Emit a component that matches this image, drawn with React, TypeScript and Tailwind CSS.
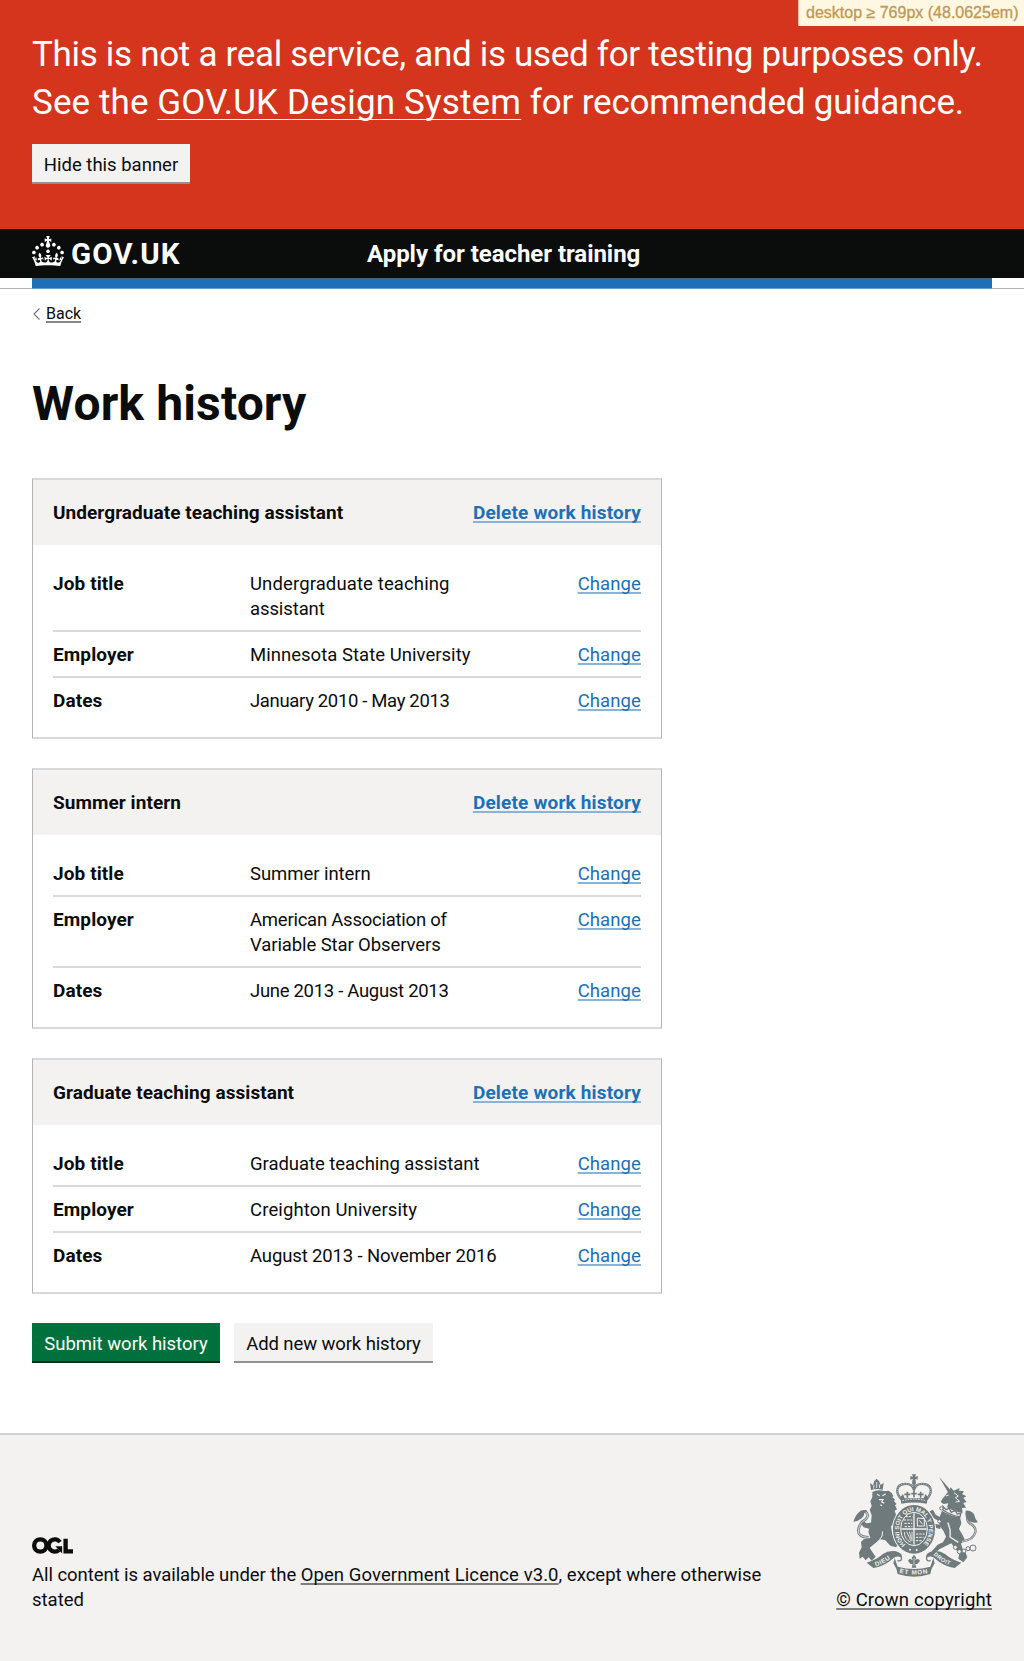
import type { ReactNode } from 'react';

type Row = { label: string; lines: { text: string; tracking: string }[] };
type Job = { title: string; rows: Row[] };

const jobs: Job[] = [
  {
    title: 'Undergraduate teaching assistant',
    rows: [
      {
        label: 'Job title',
        lines: [
          { text: 'Undergraduate teaching', tracking: 'tracking-[0.12px]' },
          { text: 'assistant', tracking: 'tracking-[-0.1px]' },
        ],
      },
      { label: 'Employer', lines: [{ text: 'Minnesota State University', tracking: 'tracking-[0.03px]' }] },
      { label: 'Dates', lines: [{ text: 'January 2010 - May 2013', tracking: 'tracking-[-0.34px]' }] },
    ],
  },
  {
    title: 'Summer intern',
    rows: [
      { label: 'Job title', lines: [{ text: 'Summer intern', tracking: 'tracking-[-0.05px]' }] },
      {
        label: 'Employer',
        lines: [
          { text: 'American Association of', tracking: 'tracking-[-0.24px]' },
          { text: 'Variable Star Observers', tracking: 'tracking-[-0.1px]' },
        ],
      },
      { label: 'Dates', lines: [{ text: 'June 2013 - August 2013', tracking: 'tracking-[-0.3px]' }] },
    ],
  },
  {
    title: 'Graduate teaching assistant',
    rows: [
      { label: 'Job title', lines: [{ text: 'Graduate teaching assistant', tracking: 'tracking-[-0.05px]' }] },
      { label: 'Employer', lines: [{ text: 'Creighton University', tracking: 'tracking-[0.12px]' }] },
      { label: 'Dates', lines: [{ text: 'August 2013 - November 2016', tracking: 'tracking-[-0.13px]' }] },
    ],
  },
];

function Link({ children, className = '' }: { children: ReactNode; className?: string }) {
  return (
    <a
      href="#"
      className={`underline decoration-2 underline-offset-2 [text-decoration-skip-ink:none] ${className}`}
    >
      {children}
    </a>
  );
}

function Crown() {
  return (
    <svg width="32" height="30" viewBox="0 0 32 30" fill="currentColor" aria-hidden="true">
      <path d="M22.6 10.4c-1 .4-2-.1-2.4-1-.4-.9.1-2 1-2.4.9-.4 2 .1 2.4 1s-.1 2-1 2.4m-5.9 6.7c-.9.4-2-.1-2.4-1-.4-.9.1-2 1-2.4.9-.4 2 .1 2.4 1s-.1 2-1 2.4m10.8-3.7c-1 .4-2-.1-2.4-1-.4-.9.1-2 1-2.4.9-.4 2 .1 2.4 1s0 2-1 2.4m3.3 4.8c-1 .4-2-.1-2.4-1-.4-.9.1-2 1-2.4.9-.4 2 .1 2.4 1s-.1 2-1 2.4M17 4.7l2.3 1.2V2.5l-2.3.7-.2-.2.9-3h-3.4l.9 3-.2.2c-.1.1-2.3-.7-2.3-.7v3.4L15 4.7c.1.1.1.2.2.2l-1.3 4c-.1.2-.1.4-.1.6 0 1.1.8 2 1.9 2.2h.7c1-.2 1.9-1.1 1.9-2.1 0-.2 0-.4-.1-.6l-1.3-4c-.1-.2 0-.2.1-.3m-7.6 5.7c.9.4 2-.1 2.4-1 .4-.9-.1-2-1-2.4-.9-.4-2 .1-2.4 1s0 2 1 2.4m-5 3c.9.4 2-.1 2.4-1 .4-.9-.1-2-1-2.4-.9-.4-2 .1-2.4 1s.1 2 1 2.4m-3.2 4.8c.9.4 2-.1 2.4-1 .4-.9-.1-2-1-2.4-.9-.4-2 .1-2.4 1s0 2 1 2.4m14.8 11c4.4 0 8.6.3 12.3.8 1.1-4.5 2.4-7 3.7-8.8l-2.5-.9c.2 1.3.3 1.9 0 2.7-.4-.4-.8-1.1-1.1-2.3l-1.2 4c.7-.5 1.3-.8 2-.9-1.1 2.5-2.6 3.1-3.5 3-1.1-.2-1.7-1.2-1.5-2.1.3-1.2 1.5-1.5 2.1-.1 1.1-2.3-.8-3-2-2.3 1.9-1.9 2.1-3.5.6-5.6-2.1 1.6-2.1 3.2-1.2 5.5-1.2-1.4-3.2-.6-2.5 1.6.9-1.4 2.1-.5 1.9.8-.2 1.1-1.7 2.1-3.5 1.9-2.7-.2-2.9-2.1-2.9-3.6.7-.1 1.9.5 2.9 1.9l.4-4.3c-1.1 1.1-2.1 1.4-3.2 1.4.4-1.2 2.1-3 2.1-3h-5.4s1.7 1.9 2.1 3c-1.1 0-2.1-.2-3.2-1.4l.4 4.3c1-1.4 2.2-2 2.9-1.9-.1 1.5-.2 3.4-2.9 3.6-1.9.2-3.4-.8-3.5-1.9-.2-1.3 1-2.2 1.9-.8.7-2.3-1.2-3-2.5-1.6.9-2.2.9-3.9-1.2-5.5-1.5 2-1.3 3.7.6 5.6-1.2-.7-3.1 0-2 2.3.6-1.4 1.8-1.1 2.1.1.2.9-.3 1.9-1.5 2.1-.9.2-2.4-.5-3.5-3 .6 0 1.2.3 2 .9l-1.2-4c-.3 1.1-.7 1.9-1.1 2.3-.3-.8-.2-1.4 0-2.7l-2.9.9C1.3 23 2.6 25.5 3.7 30c3.7-.5 7.9-.8 12.3-.8" />
    </svg>
  );
}

function LicenceLogo() {
  return (
    <svg width="41" height="17" viewBox="0 0 483 196" fill="none" stroke="currentColor" strokeWidth="51" aria-hidden="true">
      <circle cx="98" cy="98" r="72.5" />
      <path d="M329 58A72.5 72.5 0 1 0 318 151" />
      <path d="M275 106H355V193L322 158Z" fill="currentColor" stroke="none" />
      <path d="M396 18V168H483" />
    </svg>
  );
}

function RoyalArms() {
  const grey = '#6f7a7c';
  const paper = '#f3f2f1';
  return (
    <svg width="125" height="102" viewBox="36 42 375 306" fill={grey} className="ml-0.5 overflow-visible" aria-hidden="true">
      {/* lion */}
      <path d="M90 90L87 69L96 76L100 63L107 56L114 63L119 75L128 68L125 89Q107 84 90 90Z" />
      <path d="M98 86L99 74M107 84V66M116 84L115 73" stroke={paper} strokeWidth="2.5" />
      <path d="M94 96Q110 86 132 94L143 92L152 99L157 108L154 112L162 118L159 123L167 132L162 136L168 148L161 152L166 168L160 185L150 200L154 222L160 240L172 253L165 262L148 257L132 240L116 238L101 251L86 263L94 276L104 290L92 302L83 292L74 301L65 290L56 296L54 278L62 262L60 246L68 238L88 234L82 215L90 190L92 165L86 150L92 138L88 124L94 112Z" />
      <path d="M98 187L76 190L64 180L57 187L68 202L84 206L96 202Z" />
      <path d="M150 183L165 178L174 190L170 203L158 200Z" />
      <path d="M108 103L116 107M124 107L134 102M114 119H126L122 126L130 130M118 134L123 137" stroke={paper} strokeWidth="3.5" fill="none" />
      <path d="M125 214Q126 230 116 238" stroke={paper} strokeWidth="3" fill="none" />
      <path d="M83 232Q50 232 52 209Q56 188 74 178Q88 163 72 154" stroke={grey} strokeWidth="8" fill="none" />
      <path d="M83 232Q50 232 52 209Q56 188 74 178Q88 163 72 154" stroke={paper} strokeWidth="2.5" fill="none" />
      <path d="M78 150Q58 148 54 157Q44 165 37 185Q52 184 62 175Q70 168 70 160Z" />
      {/* unicorn */}
      <path d="M294 50L323 84L328 94L321 97Z" />
      <path d="M321 95L329 82L338 92L356 84L354 92L369 94L363 102L376 109L367 114L377 126L367 129L375 143L363 144L365 158Q345 158 318 142L322 130L308 132L299 126L304 117L312 107Z" />
      <path d="M315 108L323 105M339 98L352 108L343 113L356 124L344 126" stroke={paper} strokeWidth="3" fill="none" />
      <path d="M306 139L315 149L324 145L331 157L342 151L349 162L360 159L357 170Q332 168 306 150Z" stroke={grey} strokeWidth="4" fill={paper} />
      <path d="M303 152Q330 170 357 171L361 190L354 207L363 222L371 238L360 251L365 266L374 278L379 292L367 307L352 296L355 280L340 263L331 250L314 258L296 267L276 284L273 273L290 254L306 247L315 230L308 214L297 199L292 181Z" />
      <path d="M298 172L284 164L276 149L266 154L271 168L283 178L297 183ZM299 195L281 191L273 178L265 186L276 202L298 207Z" />
      <path d="M320 188Q330 207 327 231L352 247" stroke={paper} strokeWidth="4" fill="none" />
      <circle cx="295" cy="184" r="5" fill={paper} stroke={grey} strokeWidth="3" />
      <circle cx="301" cy="145" r="5" fill={paper} stroke={grey} strokeWidth="3" />
      <path d="M363 244Q397 241 403 217Q406 200 387 191Q374 180 381 158" stroke={grey} strokeWidth="7" fill="none" />
      <path d="M363 244Q397 241 403 217Q406 200 387 191Q374 180 381 158" stroke={paper} strokeWidth="2" fill="none" />
      <path d="M374 152Q389 150 399 163Q402 177 411 187Q396 190 384 183Q370 173 374 152Z" />
      <g fill={paper} stroke={grey} strokeWidth="3">
        <circle cx="343" cy="262" r="6" />
        <circle cx="355" cy="275" r="6" />
        <circle cx="369" cy="273" r="6" />
        <circle cx="381" cy="266" r="6" />
        <circle cx="396" cy="264" r="9" />
      </g>
      {/* crown */}
      <path d="M213 43H225L222 51L230 48V59L222 56L225 65H213L216 56L208 59V48L216 51Z" />
      <circle cx="219" cy="69" r="6" />
      <path d="M184 120C160 99 166 74 189 72C207 70 216 76 219 90C222 76 231 70 249 72C272 74 278 99 254 120" fill="none" stroke={grey} strokeWidth="7" />
      <path d="M184 120C160 99 166 74 189 72C207 70 216 76 219 90C222 76 231 70 249 72C272 74 278 99 254 120" fill="none" stroke={paper} strokeWidth="2" strokeDasharray="3 4" />
      <path d="M219 74V112M199 95V113M239 95V113M190 103H208M230 103H248M211 101H227" stroke={grey} strokeWidth="5" />
      <path d="M178 112L186 102L191 115H248L253 102L261 112L257 131Q219 124 181 131Z" />
      <path d="M184 122Q219 113 254 122" stroke={paper} strokeWidth="2.5" strokeDasharray="5 3" fill="none" />
      {/* garter and shield */}
      <ellipse cx="219" cy="208" rx="66" ry="76" fill={paper} />
      <ellipse cx="219" cy="208" rx="63" ry="73" />
      <ellipse cx="219" cy="207" rx="40" ry="50" fill="none" stroke={paper} strokeWidth="3" />
      <path d="M219 160V254M181 207H257" stroke={paper} strokeWidth="4" />
      <path d="M188 180H214M190 190H214M191 200H214M193 170H214" stroke={paper} strokeWidth="3" strokeDasharray="7 3" />
      <path d="M225 222H251M225 232H248M225 242H242" stroke={paper} strokeWidth="3" strokeDasharray="7 3" />
      <path d="M229 174V198H250V176ZM235 181L244 192" stroke={paper} strokeWidth="3" fill="none" />
      <path d="M190 216Q190 238 209 247M197 215L210 243M205 215L211 236M213 215V244" stroke={paper} strokeWidth="2.5" fill="none" />
      <path id="garter" d="M194 254A45 55 0 1 1 244 254" fill="none" />
      <text fill={paper} fontFamily="Liberation Sans" fontSize="18" fontWeight="700">
        <textPath href="#garter" textLength="256" lengthAdjust="spacing">HONI SOIT QUI MAL Y PENSE</textPath>
      </text>
      <circle cx="207" cy="269" r="3" fill={paper} />
      <circle cx="227" cy="270" r="3" fill={paper} />
      {/* motto ribbon */}
      <path d="M219 284L226 293L223 300L232 296L237 303L229 312L223 312L226 323H212L215 312L209 312L201 303L206 296L215 300L212 293Z" />
      <path d="M219 292V317" stroke={paper} strokeWidth="2" />
      <path d="M77 308Q105 300 126 282Q143 270 165 274Q186 280 181 292Q165 286 158 294Q131 319 97 324Z" />
      <path d="M361 308Q333 300 312 282Q295 270 273 274Q252 280 257 292Q273 286 280 294Q307 319 341 324Z" />
      <path d="M179 285Q187 306 169 302M259 285Q251 306 269 302" fill="none" stroke={grey} strokeWidth="4" />
      <path d="M161 294Q165 306 170 320Q219 334 268 320Q273 306 277 294L281 310Q270 326 268 342Q219 358 170 342Q168 326 157 310Z" />
      <path id="motto-left" d="M104 319Q132 311 155 290" fill="none" />
      <path id="motto-right" d="M277 284Q302 309 336 319" fill="none" />
      <path id="motto-centre" d="M175 338Q219 349 266 338" fill="none" />
      <g fill={paper} fontFamily="Liberation Sans" fontWeight="700" fontSize="19">
        <text><textPath href="#motto-left" textLength="50">DIEU</textPath></text>
        <text fontSize="17"><textPath href="#motto-right" textLength="58">DROIT</textPath></text>
        <text><textPath href="#motto-centre" textLength="86">ET MON</textPath></text>
      </g>
    </svg>
  );
}

function Card({ job }: { job: Job }) {
  return (
    <section className="border-x border-y-2 border-x-[#b1b4b6] border-y-[#d8d9da]">
      <div className="flex h-[65px] items-center justify-between bg-[#f3f2f1] px-5 pb-px text-[19px] font-bold">
        <h2 className="tracking-[0.06px]">{job.title}</h2>
        <Link className="text-[#1d70b8] decoration-[#88b4da] tracking-[0.17px]">Delete work history</Link>
      </div>
      <dl className="px-5 pt-4 pb-[15px]">
        {job.rows.map((row) => (
          <div
            key={row.label}
            className="flex border-b-2 border-[#d8d9da] pt-[11px] pb-2 last:border-b-0"
          >
            <dt className="-mt-px w-[197px] text-[19px] font-bold tracking-[0.1px]">{row.label}</dt>
            <dd className="grow">
              {row.lines.map((line) => (
                <div key={line.text} className={line.tracking}>{line.text}</div>
              ))}
            </dd>
            <dd>
              <Link className="text-[#1d70b8] decoration-[#88b4da] tracking-[0.1px]">Change</Link>
            </dd>
          </div>
        ))}
      </dl>
    </section>
  );
}

export default function App() {
  return (
    <div className="relative h-[1661px] overflow-hidden bg-white font-['Roboto',sans-serif] text-[18.5px] leading-[25px] text-[#0b0c0c]">
      <div className="absolute top-0 right-0 h-[26px] w-[226px] border-l border-[#f3b9a0] bg-[#fef7e2] pl-[7px] font-['Liberation_Sans',sans-serif] text-base leading-[25px] whitespace-nowrap text-[#c09853] [-webkit-text-stroke:0.3px_#c09853]">
        desktop ≥ 769px (48.0625em)
      </div>

      <div className="h-[229px] bg-[#d4351c] px-8 pt-[31px] text-[35px] leading-[48px] whitespace-nowrap text-white">
        <p>
          <span className="tracking-[-0.31px]">This is not a real service, and is used for testing purposes only.</span>
          <br />
          <span className="tracking-[0.1px]">See the </span>
          <a href="#" className="tracking-[0.17px] underline decoration-1 underline-offset-[5px] [text-decoration-skip-ink:none]">
            GOV.UK Design System
          </a>
          <span className="tracking-[-0.18px]"> for recommended guidance.</span>
        </p>
        <button className="mt-[17px] block h-[40px] w-[158px] border-b-2 border-[#929191] bg-[#f3f2f1] pt-[3px] text-[18.5px] leading-[37px] text-[#0b0c0c]">
          Hide this banner
        </button>
      </div>

      <header>
        <div className="h-[49px] bg-[#0b0c0c] px-8 text-white">
          <div className="flex pt-[7px]">
            <Crown />
            <div className="w-[303px] pt-px pl-[7px] text-[29.5px] leading-[34px] font-bold tracking-[1.1px]">GOV.UK</div>
            <div className="pt-px text-2xl leading-[34px] font-bold tracking-[-0.04px]">Apply for teacher training</div>
          </div>
        </div>
        <div className="border-b border-[#b1b4b6] px-8">
          <div className="-mb-px h-[11px] border-t border-b border-t-[#4b6579] border-b-[#679ac4] bg-[#1d70b8]" />
        </div>
      </header>

      <main className="px-8">
        <div className="flex items-start pt-[15px] text-base leading-5">
          <svg width="14" height="12" viewBox="0 0 14 12" fill="none" stroke="#6f7475" strokeWidth="1.1" className="mt-1" aria-hidden="true">
            <path d="M7.5 .5L2 6L7.5 11.5" />
          </svg>
          <Link className="decoration-[#858686]">Back</Link>
        </div>
        <h1 className="mt-[55px] text-5xl leading-[50px] font-bold tracking-[0.14px]">Work history</h1>

        <div className="mt-[49px] flex w-[630px] flex-col gap-[29px]">
          {jobs.map((job) => (
            <Card key={job.title} job={job} />
          ))}
        </div>

        <div className="mt-[29px] flex gap-3.5">
          <button className="h-[40px] w-[188px] border-b-2 border-[#00301a] bg-[#00703c] pt-[3px] leading-[37px] text-white">
            Submit work history
          </button>
          <button className="h-[40px] w-[199px] border-b-2 border-[#929191] bg-[#f3f2f1] pt-[3px] leading-[37px] tracking-[-0.1px]">
            Add new work history
          </button>
        </div>
      </main>

      <footer className="mt-[70px] flex h-[228px] items-start justify-between border-t-2 border-[#cfd2d2] bg-[#f3f2f1] px-8">
        <div className="pt-[102px]">
          <LicenceLogo />
          <p className="mt-[9px] whitespace-nowrap">
            <span className="tracking-[-0.06px]">All content is available under the </span>
            <Link className="tracking-[0.08px] decoration-[#7f7f7f]">Open Government Licence v3.0</Link>, except where otherwise
            <br />
            stated
          </p>
        </div>
        <div className="flex flex-col items-center pt-[39px]">
          <RoyalArms />
          <Link className="mt-3 tracking-[0.15px] decoration-[#7f7f7f]">© Crown copyright</Link>
        </div>
      </footer>
    </div>
  );
}
